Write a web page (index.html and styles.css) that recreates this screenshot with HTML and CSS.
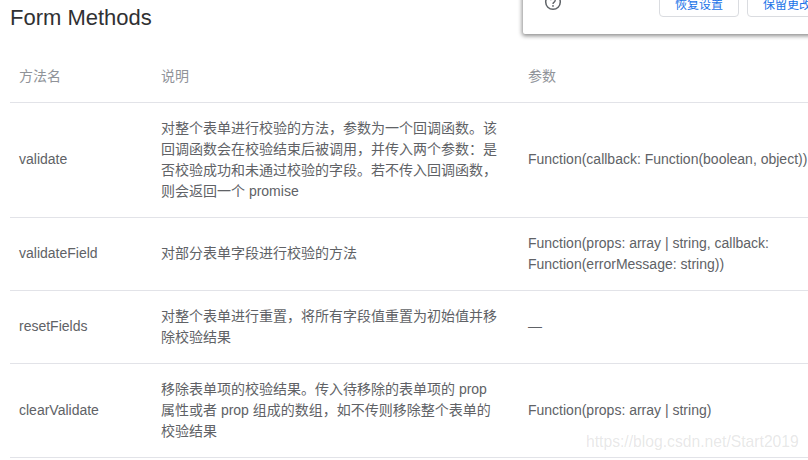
FILE: index.html
```html
<!DOCTYPE html>
<html lang="zh-CN">
<head>
<meta charset="utf-8">
<title>Form Methods</title>
<link rel="stylesheet" href="styles.css">
</head>
<body>
<main class="page">
  <h3 class="title">Form Methods</h3>
  <table class="methods">
    <colgroup>
      <col class="col-name">
      <col class="col-desc">
      <col class="col-params">
    </colgroup>
    <thead>
      <tr><th>方法名</th><th>说明</th><th>参数</th></tr>
    </thead>
    <tbody>
      <tr>
        <td class="one-line">validate</td>
        <td>对整个表单进行校验的方法，参数为一个回调函数。该回调函数会在校验结束后被调用，并传入两个参数：是否校验成功和未通过校验的字段。若不传入回调函数，则会返回一个 promise</td>
        <td class="one-line">Function(callback: Function(boolean, object))</td>
      </tr>
      <tr>
        <td class="one-line">validateField</td>
        <td class="one-line">对部分表单字段进行校验的方法</td>
        <td>Function(props: array | string, callback: Function(errorMessage: string))</td>
      </tr>
      <tr>
        <td class="one-line">resetFields</td>
        <td>对整个表单进行重置，将所有字段值重置为初始值并移除校验结果</td>
        <td class="one-line">—</td>
      </tr>
      <tr>
        <td>clearValidate</td>
        <td>移除表单项的校验结果。传入待移除的表单项的 prop 属性或者 prop 组成的数组，如不传则移除整个表单的校验结果</td>
        <td>Function(props: array | string)</td>
      </tr>
    </tbody>
  </table>
</main>
<aside class="popup">
  <svg class="help" width="18" height="18" viewBox="0 0 18 18" aria-hidden="true">
    <circle cx="9" cy="9" r="7.3" fill="none" stroke="#5f6368" stroke-width="1.5"/>
    <path d="M6.8 7.2a2.2 2.2 0 1 1 3.4 1.9c-.8.5-1.2.9-1.2 1.8" fill="none" stroke="#5f6368" stroke-width="1.4"/>
    <circle cx="9" cy="12.9" r=".9" fill="#5f6368"/>
  </svg>
  <div class="actions">
    <button class="btn">恢复设置</button>
    <button class="btn">保留更改</button>
  </div>
</aside>
<div class="watermark">https://blog.csdn.net/Start2019</div>
</body>
</html>
```
FILE: styles.css
```css
html, body {
  margin: 0;
  height: 100%;
  overflow: hidden;
  background: #fff;
}
body {
  position: relative;
  font-family: "Liberation Sans", "Noto Sans CJK SC", sans-serif;
  font-size: 14px;
  color: #606266;
}
.page {
  padding: 0 0 0 10px;
}
.title {
  margin: 0 0 15px;
  font-size: 22px;
  font-weight: 400;
  line-height: 36px;
  color: #303133;
}
.methods {
  table-layout: fixed;
  width: 900px;
  border-collapse: collapse;
  line-height: 21px;
}
.col-name { width: 142px; }
.col-desc { width: 367px; }
.methods th, .methods td {
  padding: 15px 10px 15px 9px;
  text-align: left;
  vertical-align: middle;
  border-bottom: 1px solid #e2e3e8;
  font-weight: 400;
}
.methods th {
  color: #909399;
}
.methods td:nth-child(2), .methods th:nth-child(2) {
  padding-right: 18px;
}
.methods td:nth-child(3) {
  padding-right: 90px;
}
.methods td.one-line {
  padding-bottom: 16px;
}
.popup {
  position: absolute;
  left: 523px;
  top: -40px;
  width: 320px;
  height: 74px;
  box-sizing: border-box;
  padding: 29px 0 0 21px;
  display: flex;
  align-items: flex-start;
  background: #fff;
  border-radius: 2px;
  box-shadow: 0 1px 4px 1px rgba(0, 0, 0, .45);
}
.help {
  flex: none;
  margin-top: 4px;
}
.actions {
  display: flex;
  gap: 8px;
  margin-left: 97px;
}
.btn {
  width: 80px;
  height: 28px;
  padding: 0;
  background: #fff;
  border: 1px solid #dadce0;
  border-radius: 4px;
  font: 12px "Liberation Sans", "Noto Sans CJK SC", sans-serif;
  color: #1a73e8;
}
.watermark {
  position: absolute;
  left: 586px;
  top: 432px;
  font-size: 15.7px;
  line-height: 20px;
  color: rgba(120, 120, 120, .18);
}
```
